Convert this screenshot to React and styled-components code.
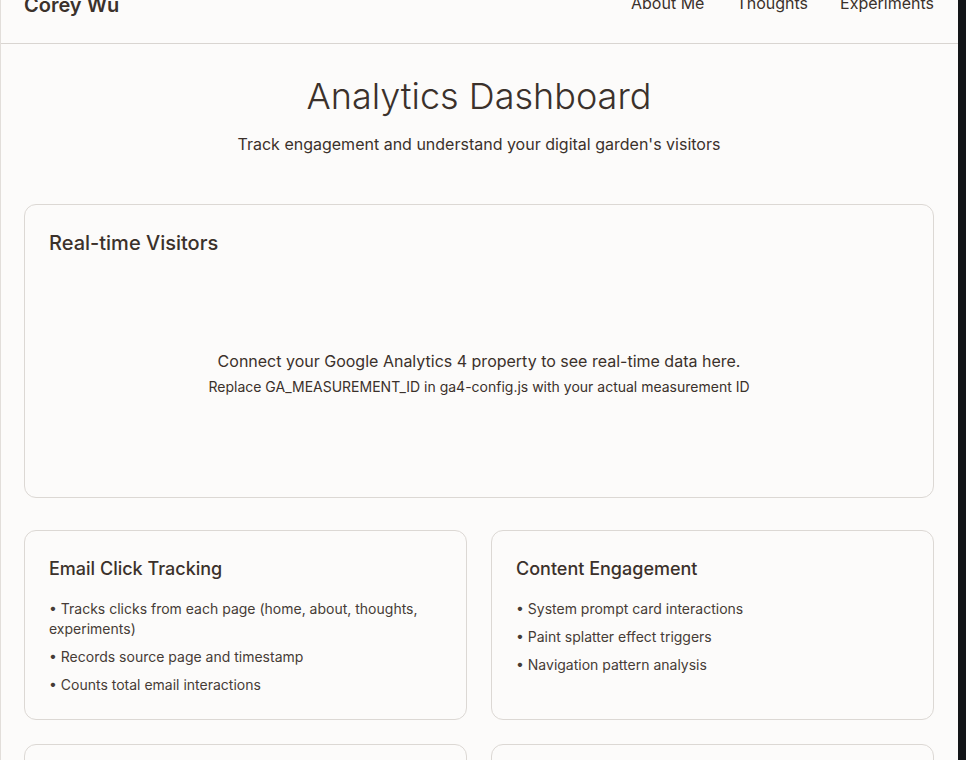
import React from 'react';
import styled, { createGlobalStyle } from 'styled-components';

const GlobalStyle = createGlobalStyle`
  html, body {
    margin: 0;
    padding: 0;
    background: #131518;
  }
  body {
    font-family: Inter, "Noto Sans", "Liberation Sans", sans-serif;
    color: #3b312b;
    -webkit-font-smoothing: antialiased;
  }
  * {
    box-sizing: border-box;
  }
`;

// The visible window: page is scrolled a little down, dark strip on the right
const Frame = styled.div`
  width: calc(100vw - 8px);
  height: 100vh;
  overflow: hidden;
  background: #fcfbfa;
  border-left: 1px solid #e2deda;
`;

const Page = styled.div`
  margin-top: -${({ scrollY }) => scrollY}px;
`;

const Header = styled.header`
  display: flex;
  justify-content: space-between;
  align-items: flex-start;
  padding: 24px 24px 24px 23px;
  border-bottom: 1px solid #d9d5d1;
`;

const Logo = styled.a`
  font-size: 20px;
  line-height: 28px;
  font-weight: 600;
  color: #3b312b;
  text-decoration: none;
`;

const Nav = styled.nav`
  display: flex;
  gap: 32px;
`;

const NavLink = styled.a`
  font-size: 16px;
  line-height: 24px;
  color: #3b312b;
  text-decoration: none;
`;

const Main = styled.main`
  padding: 32px 24px 48px 23px;
`;

const Intro = styled.section`
  text-align: center;
  margin-bottom: 48px;
`;

const Title = styled.h1`
  margin: 0 0 16px;
  font-size: 36px;
  line-height: 40px;
  font-weight: 300;
`;

const Subtitle = styled.p`
  margin: 0;
  font-size: 16px;
  line-height: 24px;
`;

const Card = styled.div`
  border: 1px solid #dcd8d4;
  border-radius: 12px;
  padding: 24px;
  background: #fcfbfa;
`;

const CardTitle = styled.h2`
  margin: 0 0 16px;
  font-size: ${({ large }) => (large ? '20px' : '18px')};
  line-height: 28px;
  font-weight: 500;
`;

const Placeholder = styled.div`
  height: 200px;
  display: flex;
  flex-direction: column;
  align-items: center;
  justify-content: center;
  text-align: center;
`;

const PlaceholderText = styled.p`
  margin: 0;
  font-size: ${({ small }) => (small ? '14px' : '16px')};
  line-height: ${({ small }) => (small ? '20px' : '24px')};
  margin-top: ${({ small }) => (small ? '4px' : '0')};
`;

const Grid = styled.div`
  display: grid;
  grid-template-columns: 1fr 1fr;
  gap: 24px;
  margin-top: 32px;
`;

const List = styled.ul`
  list-style: none;
  margin: 0;
  padding: 0;
  display: flex;
  flex-direction: column;
  gap: 8px;
`;

const Item = styled.li`
  font-size: 14px;
  line-height: 20px;
  color: #463c36;
`;

const cards = [
  {
    title: 'Email Click Tracking',
    items: [
      'Tracks clicks from each page (home, about, thoughts, experiments)',
      'Records source page and timestamp',
      'Counts total email interactions',
    ],
  },
  {
    title: 'Content Engagement',
    items: [
      'System prompt card interactions',
      'Paint splatter effect triggers',
      'Navigation pattern analysis',
    ],
  },
  {
    title: 'Visitor Insights',
    items: ['Geographic distribution', 'Device and browser breakdown', 'Returning visitor rate'],
  },
  {
    title: 'Page Performance',
    items: ['Average time on page', 'Scroll depth per section', 'Exit page tracking'],
  },
];

const App = () => {
  return (
    <>
      <GlobalStyle />
      <Frame>
        <Page scrollY={33}>
          <Header>
            <Logo href="#">Corey Wu</Logo>
            <Nav>
              <NavLink href="#">About Me</NavLink>
              <NavLink href="#">Thoughts</NavLink>
              <NavLink href="#">Experiments</NavLink>
            </Nav>
          </Header>
          <Main>
            <Intro>
              <Title>Analytics Dashboard</Title>
              <Subtitle>Track engagement and understand your digital garden's visitors</Subtitle>
            </Intro>

            <Card>
              <CardTitle large>Real-time Visitors</CardTitle>
              <Placeholder>
                <PlaceholderText>
                  Connect your Google Analytics 4 property to see real-time data here.
                </PlaceholderText>
                <PlaceholderText small>
                  Replace GA_MEASUREMENT_ID in ga4-config.js with your actual measurement ID
                </PlaceholderText>
              </Placeholder>
            </Card>

            <Grid>
              {cards.map(card => (
                <Card key={card.title}>
                  <CardTitle>{card.title}</CardTitle>
                  <List>
                    {card.items.map(item => (
                      <Item key={item}>• {item}</Item>
                    ))}
                  </List>
                </Card>
              ))}
            </Grid>
          </Main>
        </Page>
      </Frame>
    </>
  );
};

export default App;
